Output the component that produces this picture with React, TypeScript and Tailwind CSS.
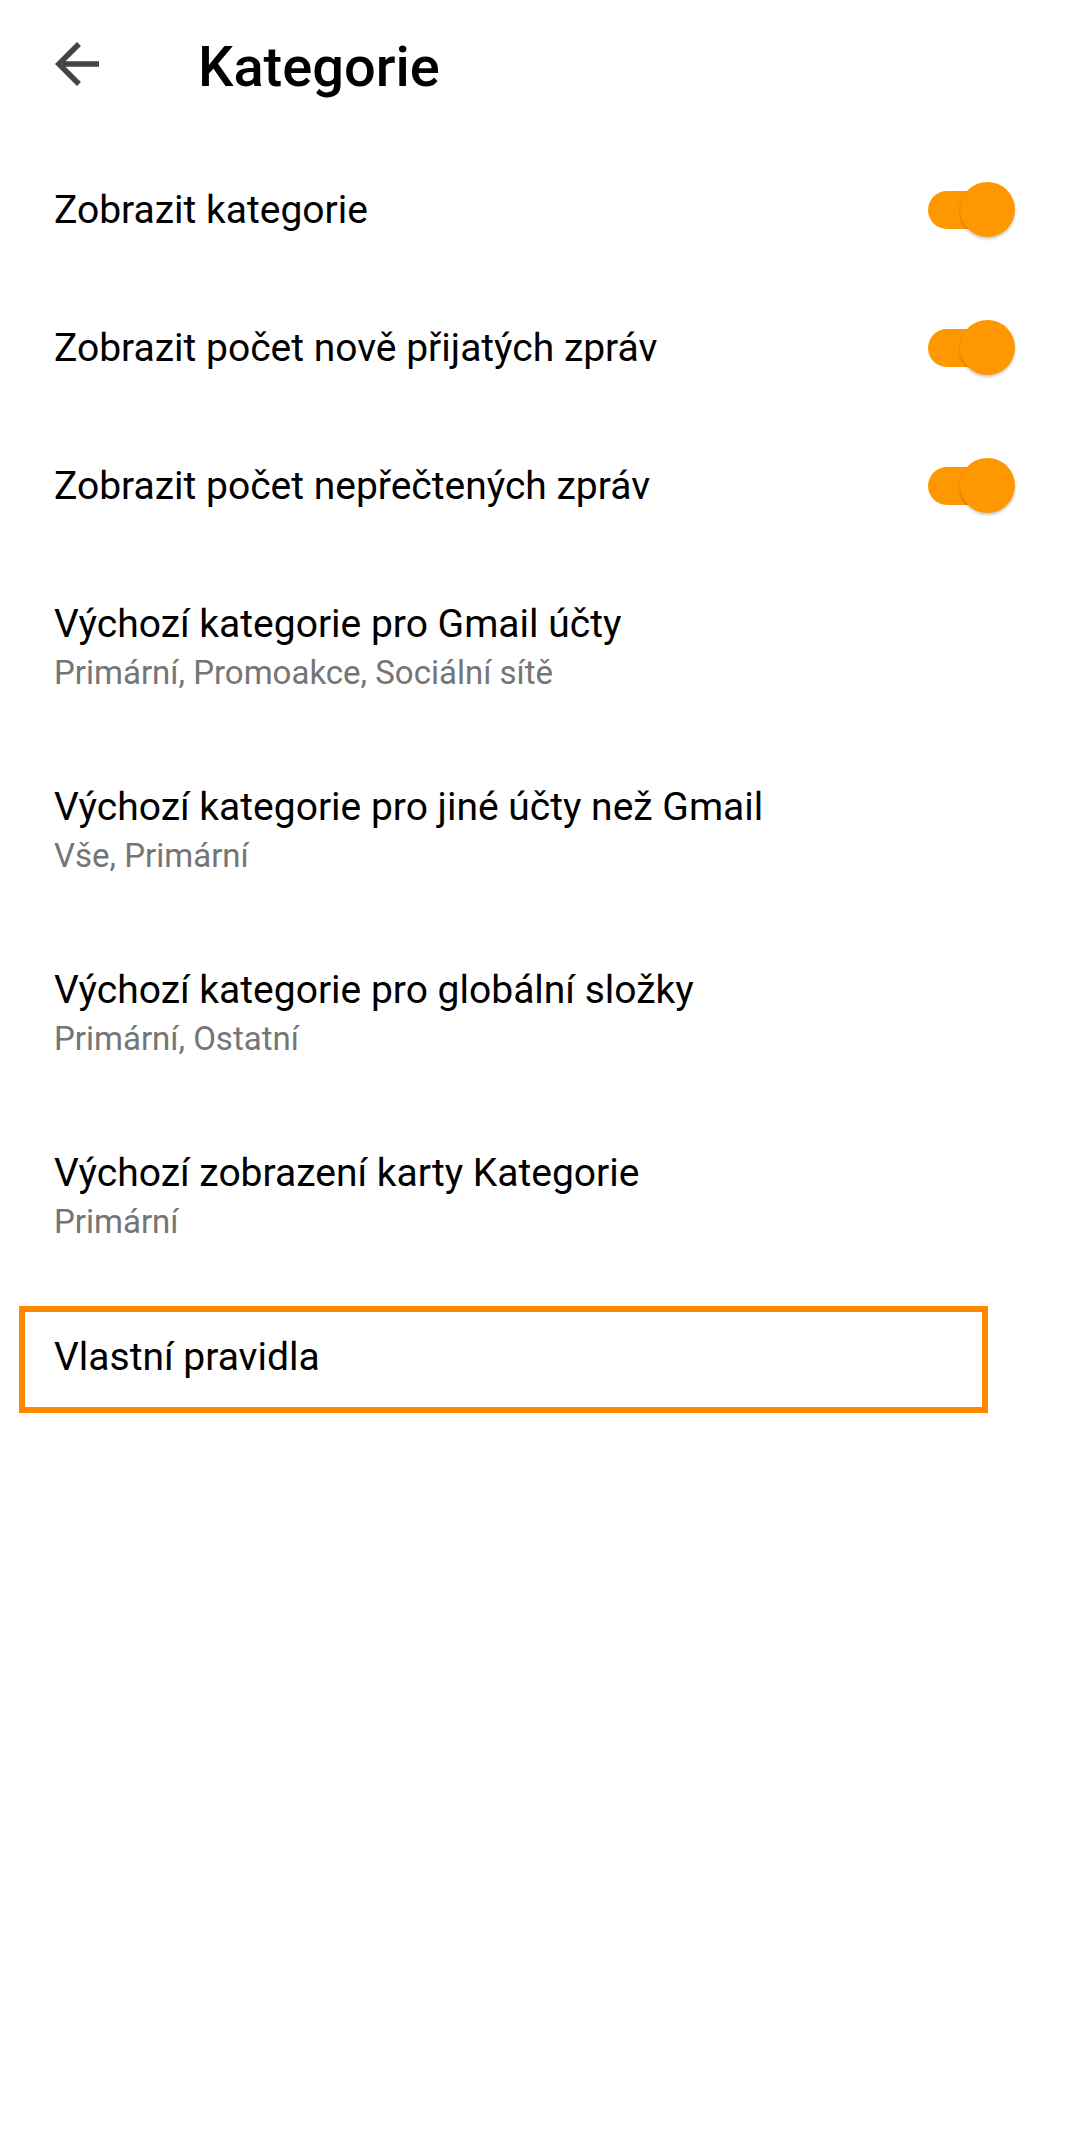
import { useState } from "react";

type ToggleRow = { id: string; label: string };
type ValueRow = { id: string; label: string; value: string };

const TOGGLES: ToggleRow[] = [
  { id: "show", label: "Zobrazit kategorie" },
  { id: "new", label: "Zobrazit počet nově přijatých zpráv" },
  { id: "unread", label: "Zobrazit počet nepřečtených zpráv" },
];

const DEFAULTS: ValueRow[] = [
  { id: "gmail", label: "Výchozí kategorie pro Gmail účty", value: "Primární, Promoakce, Sociální sítě" },
  { id: "other", label: "Výchozí kategorie pro jiné účty než Gmail", value: "Vše, Primární" },
  { id: "global", label: "Výchozí kategorie pro globální složky", value: "Primární, Ostatní" },
  { id: "tab", label: "Výchozí zobrazení karty Kategorie", value: "Primární" },
];

const Switch = ({ on, onChange }: { on: boolean; onChange: () => void }) => (
  <button onClick={onChange} className="relative w-[87px] h-[56px] shrink-0">
    <span
      className={`absolute left-0 top-[9px] w-[78px] h-[38px] rounded-full ${on ? "bg-[#ff9800]" : "bg-[#bdbdbd]"}`}
    />
    <span
      className={`absolute top-0 w-[55px] h-[55px] rounded-full shadow-[0_2px_3px_rgba(0,0,0,0.22)] ${
        on ? "right-0 bg-[#ff9800]" : "left-0 bg-[#f5f5f5]"
      }`}
    />
  </button>
);

export default function App() {
  const [toggles, setToggles] = useState<Record<string, boolean>>({ show: true, new: true, unread: true });

  return (
    <div className="w-[1080px] min-h-[2153px] bg-white font-['Roboto',sans-serif] text-black">
      {/* toolbar */}
      <div className="h-[128px] flex items-center pl-[44px]">
        <svg viewBox="0 0 24 24" className="w-[66px] h-[66px] fill-[#444444]">
          <path d="M20 11H7.83l5.59-5.59L12 4l-8 8 8 8 1.41-1.41L7.83 13H20v-2z" />
        </svg>
        <h1 className="ml-[88px] pt-[5px] text-[56px] font-medium leading-normal">Kategorie</h1>
      </div>

      <div className="pt-[13px]">
        {TOGGLES.map((t) => (
          <div key={t.id} className="h-[138px] flex items-center justify-between pl-[54px] pr-[65px]">
            <span className="text-[39px] leading-[45px]">{t.label}</span>
            <Switch on={toggles[t.id]} onChange={() => setToggles((p) => ({ ...p, [t.id]: !p[t.id] }))} />
          </div>
        ))}

        {DEFAULTS.map((d) => (
          <div key={d.id} className="h-[183px] flex flex-col justify-center pl-[54px] pr-[65px]">
            <span className="text-[39px] leading-[45px]">{d.label}</span>
            <span className="mt-[7px] text-[33px] leading-[38px] text-[#757575]">{d.value}</span>
          </div>
        ))}

        <div className="mt-[19px] ml-[19px] w-[969px] h-[107px] border-[6px] border-[#ff8800] flex items-center pl-[29px] pb-[4px]">
          <span className="text-[39px] leading-[45px]">Vlastní pravidla</span>
        </div>
      </div>
    </div>
  );
}
